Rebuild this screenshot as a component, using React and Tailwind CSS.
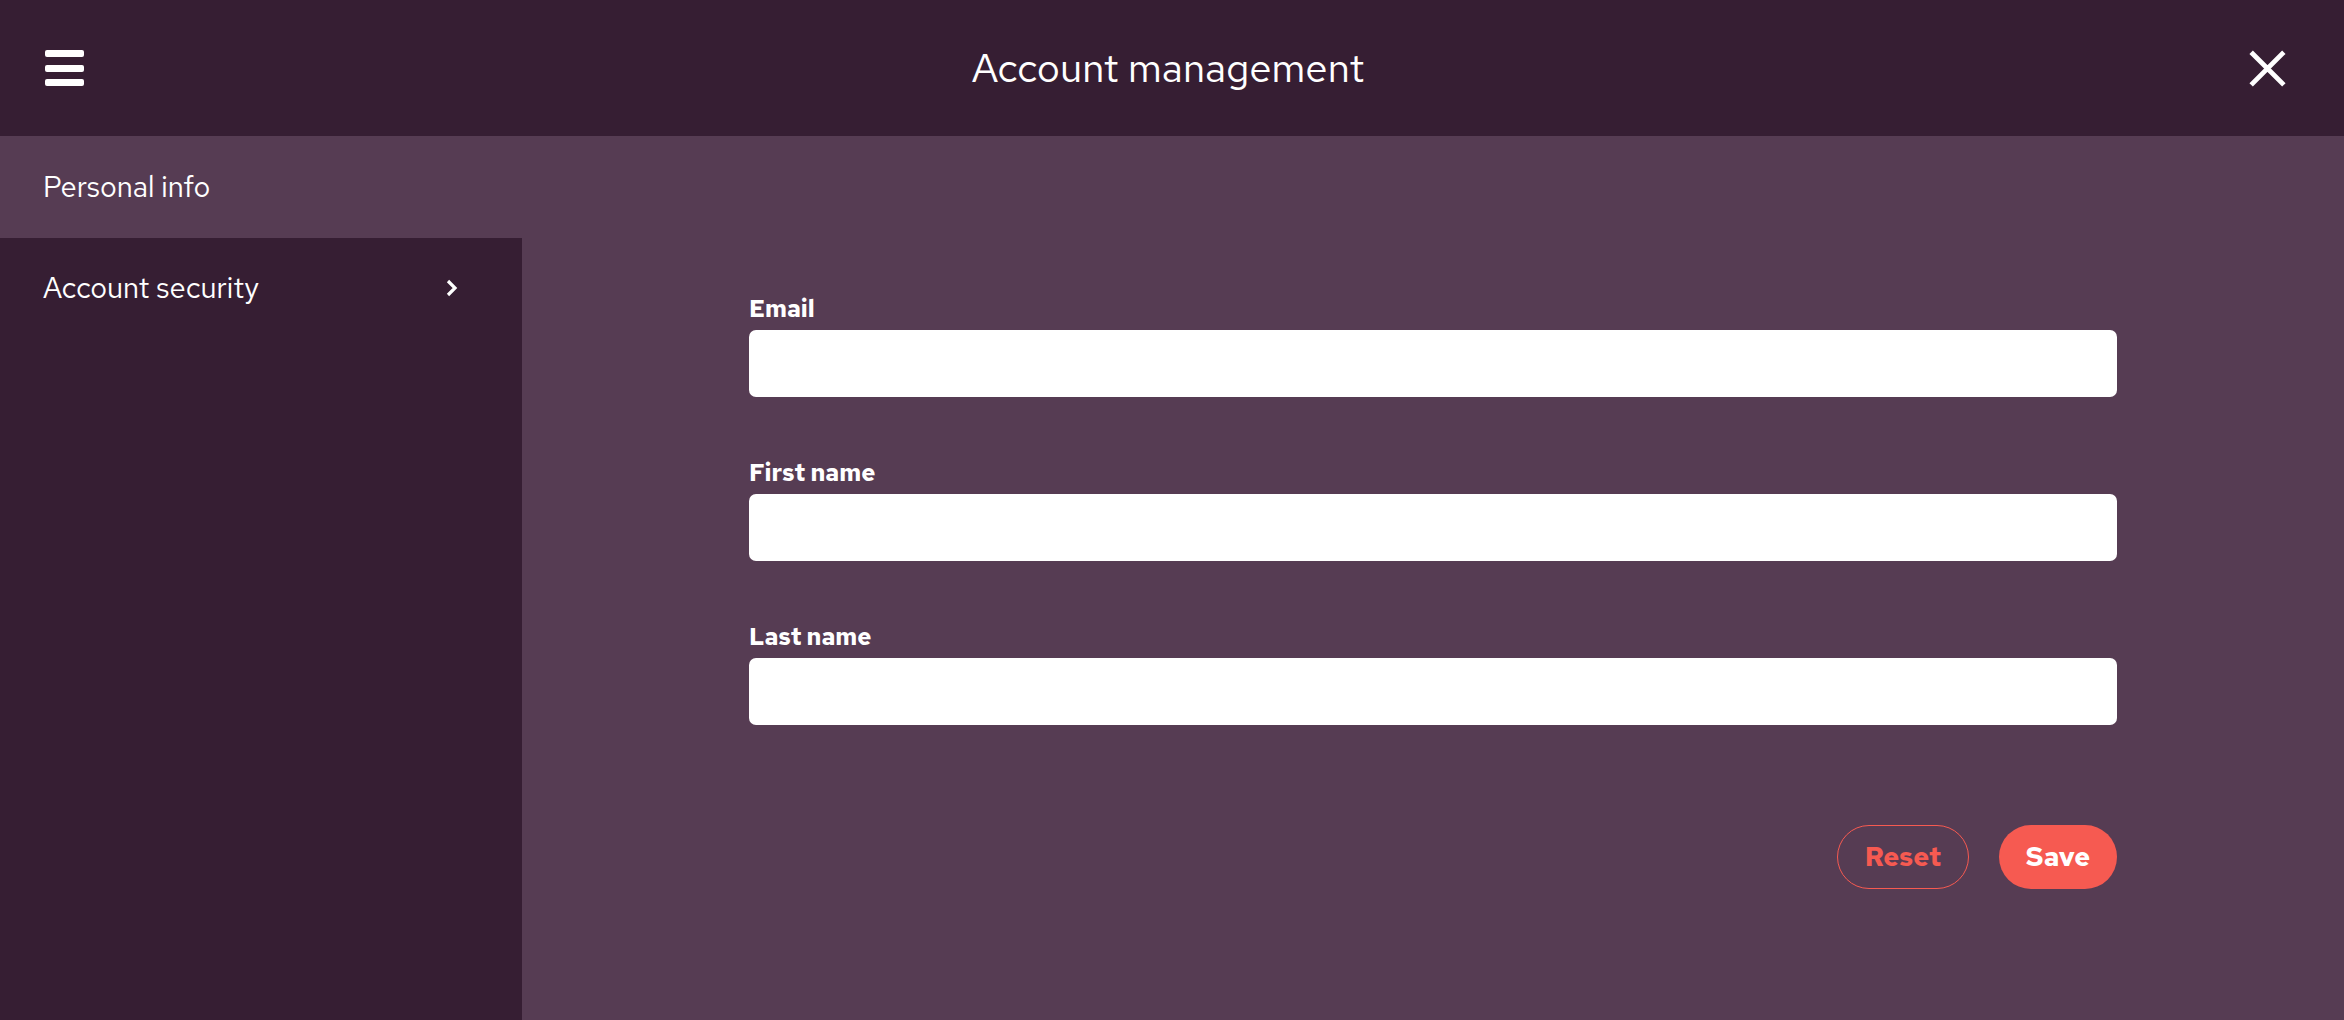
import { useState } from "react";

function Field({ label, value, onChange }) {
  return (
    <div className="flex flex-col gap-[5px]">
      <label className="text-[24px] leading-[32px] font-bold text-white">{label}</label>
      <input
        type="text"
        value={value}
        onChange={onChange}
        className="h-[67px] w-full rounded-[7px] bg-white px-4 text-[24px] text-[#361e33] outline-none"
      />
    </div>
  );
}

export default function App() {
  const [form, setForm] = useState({ email: "", first: "", last: "" });

  return (
    <div
      className="min-h-screen flex flex-col bg-[#563c53] text-white"
      style={{ fontFamily: "'Red Hat Text', 'Open Sans', 'Noto Sans', sans-serif" }}
    >
      {/* header */}
      <header className="h-[136px] shrink-0 bg-[#361e33] flex items-center justify-between pl-[45px] pr-[57px]">
        <button type="button" className="w-[39px] h-[36px] flex flex-col justify-between">
          <span className="block h-[7px] w-full rounded-[2px] bg-white" />
          <span className="block h-[7px] w-full rounded-[2px] bg-white" />
          <span className="block h-[7px] w-full rounded-[2px] bg-white" />
        </button>
        <h1 className="text-[40px] font-normal ml-[4px]">Account management</h1>
        <button type="button" className="w-[39px] h-[39px] flex items-center justify-center">
          <svg viewBox="0 0 24 24" className="w-[39px] h-[39px]" fill="none" stroke="white" strokeWidth="3" strokeLinecap="square">
            <path d="M3 3L21 21M21 3L3 21" />
          </svg>
        </button>
      </header>

      <div className="flex flex-1">
        {/* sidebar */}
        <aside className="w-[522px] shrink-0 flex flex-col">
          <div className="h-[102px] flex items-center px-[43px] text-[29px]">Personal info</div>
          <div className="flex-1 bg-[#361e33]">
            <div className="h-[100px] flex items-center justify-between pl-[43px] pr-[64px] text-[29px]">
              <span>Account security</span>
              <svg viewBox="0 0 12 18" className="w-[12px] h-[18px]" fill="none" stroke="white" strokeWidth="3.2">
                <path d="M2 2L9 9L2 16" />
              </svg>
            </div>
          </div>
        </aside>

        {/* form */}
        <main className="flex-1 pl-[227px] pr-[227px] pt-[157px]">
          <div className="flex flex-col gap-[60px]">
            <Field label="Email" value={form.email} onChange={(e) => setForm({ ...form, email: e.target.value })} />
            <Field label="First name" value={form.first} onChange={(e) => setForm({ ...form, first: e.target.value })} />
            <Field label="Last name" value={form.last} onChange={(e) => setForm({ ...form, last: e.target.value })} />
          </div>
          <div className="flex justify-end gap-[30px] mt-[100px]">
            <button type="button" className="w-[132px] h-[64px] rounded-full border border-[#f65a51] text-[#f65a51] text-[27px] font-bold">
              Reset
            </button>
            <button type="button" className="w-[118px] h-[64px] rounded-full bg-[#f65a51] text-white text-[27px] font-bold">
              Save
            </button>
          </div>
        </main>
      </div>
    </div>
  );
}
